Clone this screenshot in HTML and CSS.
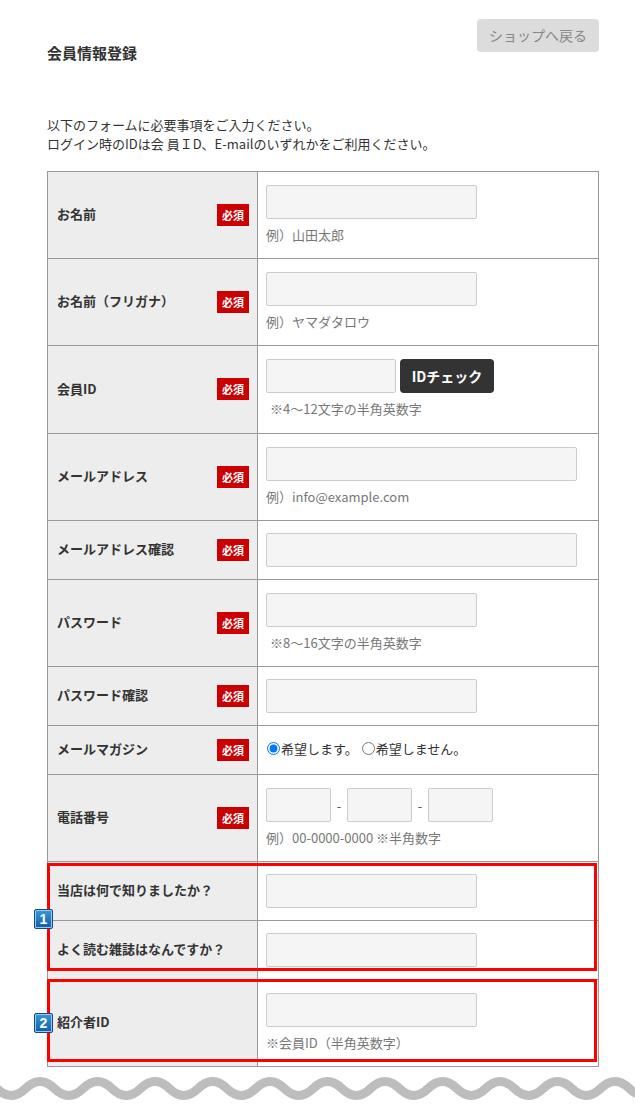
FILE: index.html
```html
<!DOCTYPE html>
<html lang="ja">
<head>
<meta charset="utf-8">
<title>会員情報登録</title>
<link rel="stylesheet" href="styles.css">
</head>
<body>
<div class="page">
  <header class="head">
    <h1 class="title">会員情報登録</h1>
    <a class="back-btn">ショップへ戻る</a>
  </header>
  <p class="intro">以下のフォームに必要事項をご入力ください。<br>ログイン時のIDは会 員ＩD、E-mailのいずれかをご利用ください。</p>

  <div class="form-wrap">
    <table class="form">
      <colgroup><col class="c-label"><col class="c-value"></colgroup>
      <tr>
        <th><div class="lab"><span>お名前</span><span class="req">必須</span></div></th>
        <td><input class="in w211" type="text"><p class="note">例）山田太郎</p></td>
      </tr>
      <tr>
        <th><div class="lab"><span>お名前（フリガナ）</span><span class="req">必須</span></div></th>
        <td><input class="in w211" type="text"><p class="note">例）ヤマダタロウ</p></td>
      </tr>
      <tr>
        <th><div class="lab"><span>会員ID</span><span class="req">必須</span></div></th>
        <td class="idcell"><div class="idrow"><input class="in w130" type="text"><button class="idbtn" type="button">IDチェック</button></div><p class="note ind">※4〜12文字の半角英数字</p></td>
      </tr>
      <tr>
        <th><div class="lab"><span>メールアドレス</span><span class="req">必須</span></div></th>
        <td><input class="in w311" type="text"><p class="note">例）info@example.com</p></td>
      </tr>
      <tr>
        <th><div class="lab"><span>メールアドレス確認</span><span class="req">必須</span></div></th>
        <td class="single"><input class="in w311" type="text"></td>
      </tr>
      <tr>
        <th><div class="lab"><span>パスワード</span><span class="req">必須</span></div></th>
        <td><input class="in w211" type="password"><p class="note ind">※8〜16文字の半角英数字</p></td>
      </tr>
      <tr>
        <th><div class="lab"><span>パスワード確認</span><span class="req">必須</span></div></th>
        <td class="single"><input class="in w211" type="password"></td>
      </tr>
      <tr>
        <th><div class="lab"><span>メールマガジン</span><span class="req">必須</span></div></th>
        <td class="radios"><label class="rd"><input type="radio" name="mm" checked>希望します。</label> <label class="rd"><input type="radio" name="mm">希望しません。</label></td>
      </tr>
      <tr>
        <th><div class="lab"><span>電話番号</span><span class="req">必須</span></div></th>
        <td><div class="tel"><input class="in w64" type="text"><span class="dash">-</span><input class="in w64" type="text"><span class="dash">-</span><input class="in w64" type="text"></div><p class="note">例）00-0000-0000 ※半角数字</p></td>
      </tr>
      <tr>
        <th><div class="lab"><span>当店は何で知りましたか？</span></div></th>
        <td class="single"><input class="in w211" type="text"></td>
      </tr>
      <tr>
        <th><div class="lab"><span>よく読む雑誌はなんですか？</span></div></th>
        <td class="single"><input class="in w211" type="text"></td>
      </tr>
      <tr>
        <th><div class="lab"><span>紹介者ID</span></div></th>
        <td><input class="in w211" type="text"><p class="note">※会員ID（半角英数字）</p></td>
      </tr>
    </table>
    <div class="mark mark1"></div>
    <div class="mark mark2"></div>
    <span class="num num1">1</span>
    <span class="num num2">2</span>
  </div>

  <svg class="wave" viewBox="0 0 635 30" width="635" height="30" aria-hidden="true">
    <path d="M -31.875 17.5 Q -17.5 3.5 -3.125 17.5 T 25.625 17.5 T 54.375 17.5 T 83.125 17.5 T 111.875 17.5 T 140.625 17.5 T 169.375 17.5 T 198.125 17.5 T 226.875 17.5 T 255.625 17.5 T 284.375 17.5 T 313.125 17.5 T 341.875 17.5 T 370.625 17.5 T 399.375 17.5 T 428.125 17.5 T 456.875 17.5 T 485.625 17.5 T 514.375 17.5 T 543.125 17.5 T 571.875 17.5 T 600.625 17.5 T 629.375 17.5 T 658.125 17.5" fill="none" stroke="#bdbdbd" stroke-width="9"/>
  </svg>
</div>
</body>
</html>
```

FILE: styles.css
```css
* { box-sizing: border-box; }
html, body { margin: 0; padding: 0; background: #fff; }
body {
  font-family: "Noto Sans CJK JP", "Noto Sans", sans-serif;
  color: #333;
  font-size: 13px;
}
.page { width: 635px; overflow: hidden; }
.head {
  display: flex;
  justify-content: space-between;
  align-items: flex-start;
  padding: 19px 36px 0 47px;
}
.title {
  margin: 0;
  margin-top: 24px;
  font-size: 15px;
  line-height: 20px;
  font-weight: bold;
  color: #333;
}
.back-btn {
  display: block;
  width: 122px;
  height: 33px;
  line-height: 33px;
  text-align: center;
  background: #dcdcdc;
  color: #888;
  font-size: 14px;
  border-radius: 4px;
}
.intro {
  margin: 52px 0 0 47px;
  font-size: 13px;
  line-height: 19px;
  color: #333;
}
.form-wrap {
  position: relative;
  margin: 18px 0 0 47px;
  width: 552px;
}
.form {
  width: 552px;
  border-collapse: collapse;
  table-layout: fixed;
  border: 1px solid #999;
}
.c-label { width: 210px; }
.form th, .form td { border: 1px solid #999; vertical-align: middle; }
.form th {
  background: #ededed;
  text-align: left;
  padding: 0 8px 3px 9px;
  font-weight: bold;
  font-size: 13px;
  color: #333;
}
.lab { display: flex; justify-content: space-between; align-items: center; }
.req {
  display: inline-block;
  width: 32px;
  height: 22px;
  line-height: 22px;
  text-align: center;
  background: #cc0000;
  color: #fff;
  font-size: 11px;
  font-weight: bold;
  margin-top: 2px;
}
.form td { padding: 13px 9px 14px 8px; background: #fff; }
.form td.idcell { padding-bottom: 15px; }
.form td.single { padding: 12px 9px 12px 8px; }
.form td.radios { padding: 13px 9px 15px 8px; line-height: 19px; font-size: 13px; color: #333; }
.in {
  display: block;
  height: 34px;
  margin: 0;
  background: #f5f5f5;
  border: 1px solid #ccc;
  border-radius: 2px;
  font: inherit;
}
.w211 { width: 211px; }
.w311 { width: 311px; }
.w130 { width: 130px; }
.w64 { width: 65px; }
.note {
  margin: 6px 0 0;
  font-size: 13px;
  line-height: 19px;
  color: #777;
}
.note.ind { padding-left: 4px; }
.idrow { display: flex; align-items: center; gap: 4px; }
.idbtn {
  height: 34px;
  width: 94px;
  padding: 0;
  border: 0;
  border-radius: 4px;
  background: #333;
  color: #fff;
  font: bold 14px "Noto Sans CJK JP", "Noto Sans", sans-serif;
}
.tel { display: flex; align-items: center; }
.dash { width: 16px; text-align: center; color: #555; font-size: 13px; }
.rd { display: inline-flex; align-items: center; }
.rd input { margin: 0 1px 0 1px; width: 13px; height: 13px; }
.mark {
  position: absolute;
  left: 0;
  width: 550px;
  border: 3px solid #ff0000;
  pointer-events: none;
}
.mark1 { top: 692px; height: 108px; }
.mark2 { top: 808px; height: 83px; }
.num {
  position: absolute;
  left: -13px;
  width: 19px;
  height: 20px;
  text-align: center;
  color: #fff;
  font: bold 14px "Liberation Sans", Arial, sans-serif;
  line-height: 18px;
  background: linear-gradient(#3a98dc, #0e5fa8);
  border: 1px solid #0b4c88;
  border-radius: 2px;
  box-shadow: 0 0 0 1px #9cc8ec inset;
}
.num1 { top: 738px; }
.num2 { top: 842px; }
.wave { display: block; margin-top: 4px; }
```
